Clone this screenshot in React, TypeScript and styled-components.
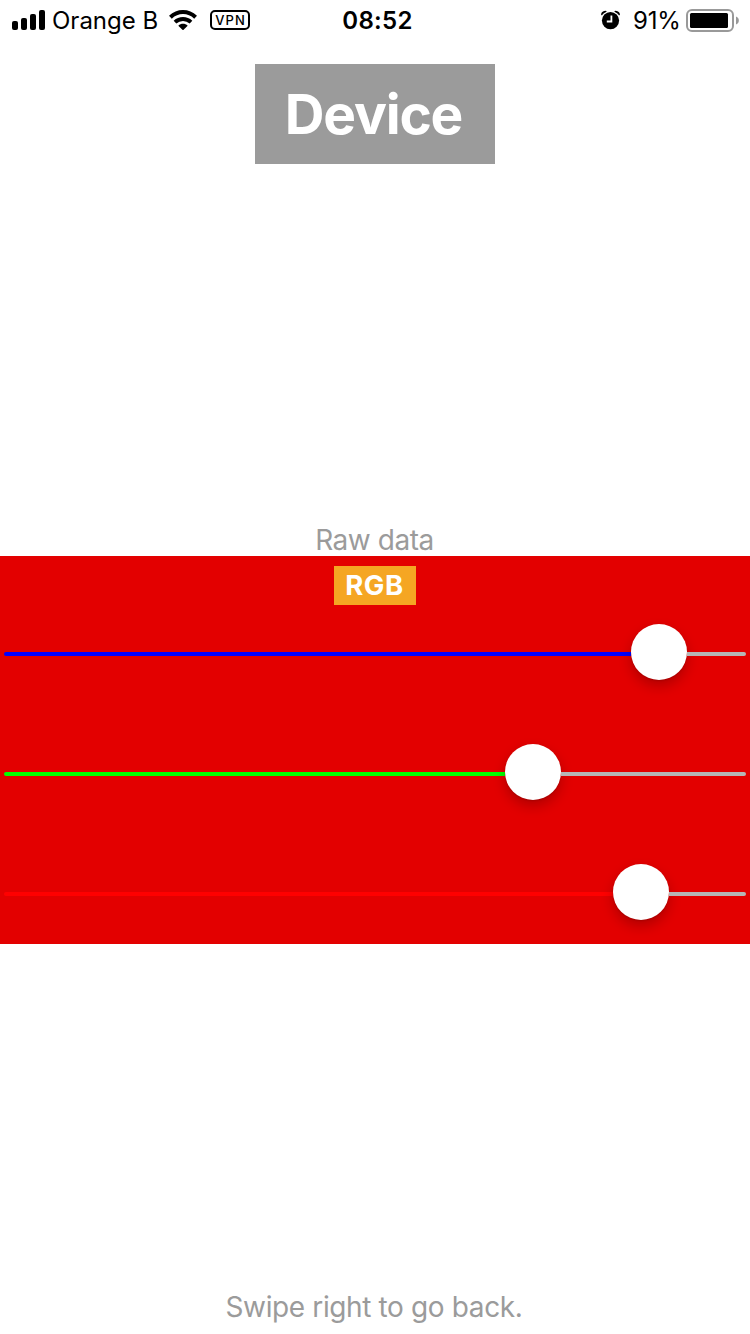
import React from "react";
import styled, { createGlobalStyle } from "styled-components";

const GlobalStyle = createGlobalStyle`
  * { box-sizing: border-box; }
  body { margin: 0; background: #fff; }
`;

const Screen = styled.main`
  display: flex;
  flex-direction: column;
  align-items: center;
  width: 750px;
  height: 1334px;
  overflow: hidden;
  background: #fff;
  font-family: Inter, "Liberation Sans", sans-serif;
`;

const StatusBar = styled.header`
  display: grid;
  grid-template-columns: 1fr auto 1fr;
  align-items: center;
  width: 100%;
  height: 40px;
  padding: 0 10px 0 12px;
  color: #000;
  flex: none;
`;

const StatusGroup = styled.div<{ $end?: boolean }>`
  display: flex;
  align-items: center;
  justify-content: ${(p) => (p.$end ? "flex-end" : "flex-start")};
  height: 40px;

  svg { display: block; flex: none; }
`;

const StatusText = styled.span<{ $weight?: number; $spacing?: number }>`
  padding-top: 2px;
  font-size: 24px;
  line-height: 38px;
  font-weight: ${(p) => p.$weight ?? 400};
  letter-spacing: ${(p) => p.$spacing ?? 0}px;
  white-space: nowrap;
`;

const Carrier = styled(StatusText)`
  width: 106px;
  margin: 0 11px 0 7px;
`;

const Clock = styled(StatusText)`
  padding-left: 3px;
`;

const Percent = styled(StatusText)`
  width: 47px;
  margin: 0 6px 0 13px;
`;

const VpnTag = styled.span`
  display: flex;
  align-items: center;
  justify-content: center;
  width: 40px;
  height: 20px;
  margin-left: 12px;
  border: 2px solid #000;
  border-radius: 5px;
  font-size: 13px;
  font-weight: 500;
  letter-spacing: 1.1px;
  text-indent: 1px;
  line-height: 16px;
`;

const DeviceButton = styled.button`
  width: 240px;
  height: 100px;
  margin: 24px 0 0;
  padding: 0 3px 0 0;
  border: 0;
  background: #9b9b9b;
  color: #fff;
  font-family: inherit;
  font-size: 55px;
  font-weight: 700;
  letter-spacing: -1.2px;
  line-height: 100px;
`;

const Caption = styled.p<{ $spacing: number }>`
  margin: 0;
  color: #9b9b9b;
  font-size: 28px;
  line-height: 34px;
  letter-spacing: ${(p) => p.$spacing}px;
  white-space: nowrap;
`;

const RawCaption = styled(Caption)`
  height: 33px;
  margin-top: 359px;
  padding-right: 1px;
`;

const SwipeHint = styled(Caption)`
  margin-top: auto;
  margin-bottom: 10px;
  padding-right: 2px;
`;

const ColorPanel = styled.section`
  display: flex;
  flex-direction: column;
  align-items: center;
  width: 100%;
  height: 388px;
  flex: none;
  padding-top: 10px;
  background: #e30000;
`;

const ModeBadge = styled.button`
  width: 82px;
  height: 39px;
  margin: 0;
  padding: 0 1px 1px 0;
  border: 0;
  background: #f5a623;
  color: #fff;
  font-family: inherit;
  font-size: 27.5px;
  font-weight: 700;
  line-height: 38px;
  letter-spacing: 0.5px;
`;

const SliderList = styled.div`
  display: flex;
  flex-direction: column;
  gap: 64px;
  width: 100%;
  padding: 0 4px;
  margin-top: 19px;
`;

const SliderRow = styled.div`
  display: flex;
  align-items: center;
  height: 56px;
`;

const Track = styled.div<{ $color: string; $grow?: boolean; $side: "left" | "right" }>`
  height: 4px;
  margin-top: 4px;
  flex: ${(p) => (p.$grow ? "1" : "none")};
  background: ${(p) => p.$color};
  border-radius: ${(p) => (p.$side === "left" ? "2px 0 0 2px" : "0 2px 2px 0")};
`;

const Thumb = styled.div`
  width: 56px;
  height: 56px;
  flex: none;
  border-radius: 50%;
  background: #fff;
  box-shadow: 0 6px 13px rgba(0, 0, 0, 0.22), 0 1px 2px rgba(0, 0, 0, 0.12);
`;

function SignalIcon() {
  return (
    <svg width="33" height="20" viewBox="0 0 33 20">
      <rect x="0" y="11" width="6" height="9" rx="2" />
      <rect x="9" y="8" width="6" height="12" rx="2" />
      <rect x="18" y="4" width="6" height="16" rx="2" />
      <rect x="27" y="0" width="6" height="20" rx="2" />
    </svg>
  );
}

function WifiIcon() {
  return (
    <svg width="29" height="20" viewBox="0 0 29 20" fill="none">
      <path d="M1.4 7.2C8.7.3 19.3.3 26.6 7.2" stroke="#000" strokeWidth="4" />
      <path d="M6 12.2C10.6 7.9 17.4 7.9 22 12.2" stroke="#000" strokeWidth="3.9" />
      <path d="M9.3 15.7C12 13.2 16 13.2 18.7 15.7L14 20.3Z" fill="#000" />
    </svg>
  );
}

function AlarmIcon() {
  return (
    <svg width="19" height="20" viewBox="0 0 19 20">
      <circle cx="9.5" cy="10.6" r="8.6" />
      <path d="M0 4.4C.4 2.2 2.2.8 5 .8L5.7 1.7C3.6 2.5 2 3.8.9 5.5Z" />
      <path d="M19 4.4C18.6 2.2 16.8.8 14 .8L13.3 1.7C15.4 2.5 17 3.8 18.1 5.5Z" />
      <path d="M10.4 5.4V11.5H5.8" fill="none" stroke="#fff" strokeWidth="1.8" />
    </svg>
  );
}

function BatteryIcon() {
  return (
    <svg width="54" height="24" viewBox="0 0 54 24">
      <rect x="1" y="2" width="46" height="21" rx="5" fill="none" stroke="#999" strokeWidth="2" />
      <rect x="4" y="5" width="38" height="15" rx="1.5" fill="#000" />
      <path d="M50 8.5C53.8 9.7 53.8 15.3 50 16.5Z" fill="#999" />
    </svg>
  );
}

const channels = [
  { name: "Blue", color: "#0000ff", rest: 59 },
  { name: "Green", color: "#00ff00", rest: 185 },
  { name: "Red", color: "#ff0000", rest: 77 },
];

export default function App() {
  return (
    <Screen>
      <GlobalStyle />
      <StatusBar>
        <StatusGroup>
          <SignalIcon />
          <Carrier>Orange B</Carrier>
          <WifiIcon />
          <VpnTag>VPN</VpnTag>
        </StatusGroup>
        <Clock $weight={600} $spacing={0.3}>08:52</Clock>
        <StatusGroup $end>
          <AlarmIcon />
          <Percent $spacing={-0.2}>91%</Percent>
          <BatteryIcon />
        </StatusGroup>
      </StatusBar>
      <DeviceButton>Device</DeviceButton>
      <RawCaption $spacing={-0.45}>Raw data</RawCaption>
      <ColorPanel>
        <ModeBadge>RGB</ModeBadge>
        <SliderList>
          {channels.map((c) => (
            <SliderRow key={c.name} role="slider" aria-label={c.name}>
              <Track $color={c.color} $side="left" $grow />
              <Thumb />
              <Track $color="#b6b6b6" $side="right" style={{ width: c.rest }} />
            </SliderRow>
          ))}
        </SliderList>
      </ColorPanel>
      <SwipeHint $spacing={-0.37}>Swipe right to go back.</SwipeHint>
    </Screen>
  );
}
